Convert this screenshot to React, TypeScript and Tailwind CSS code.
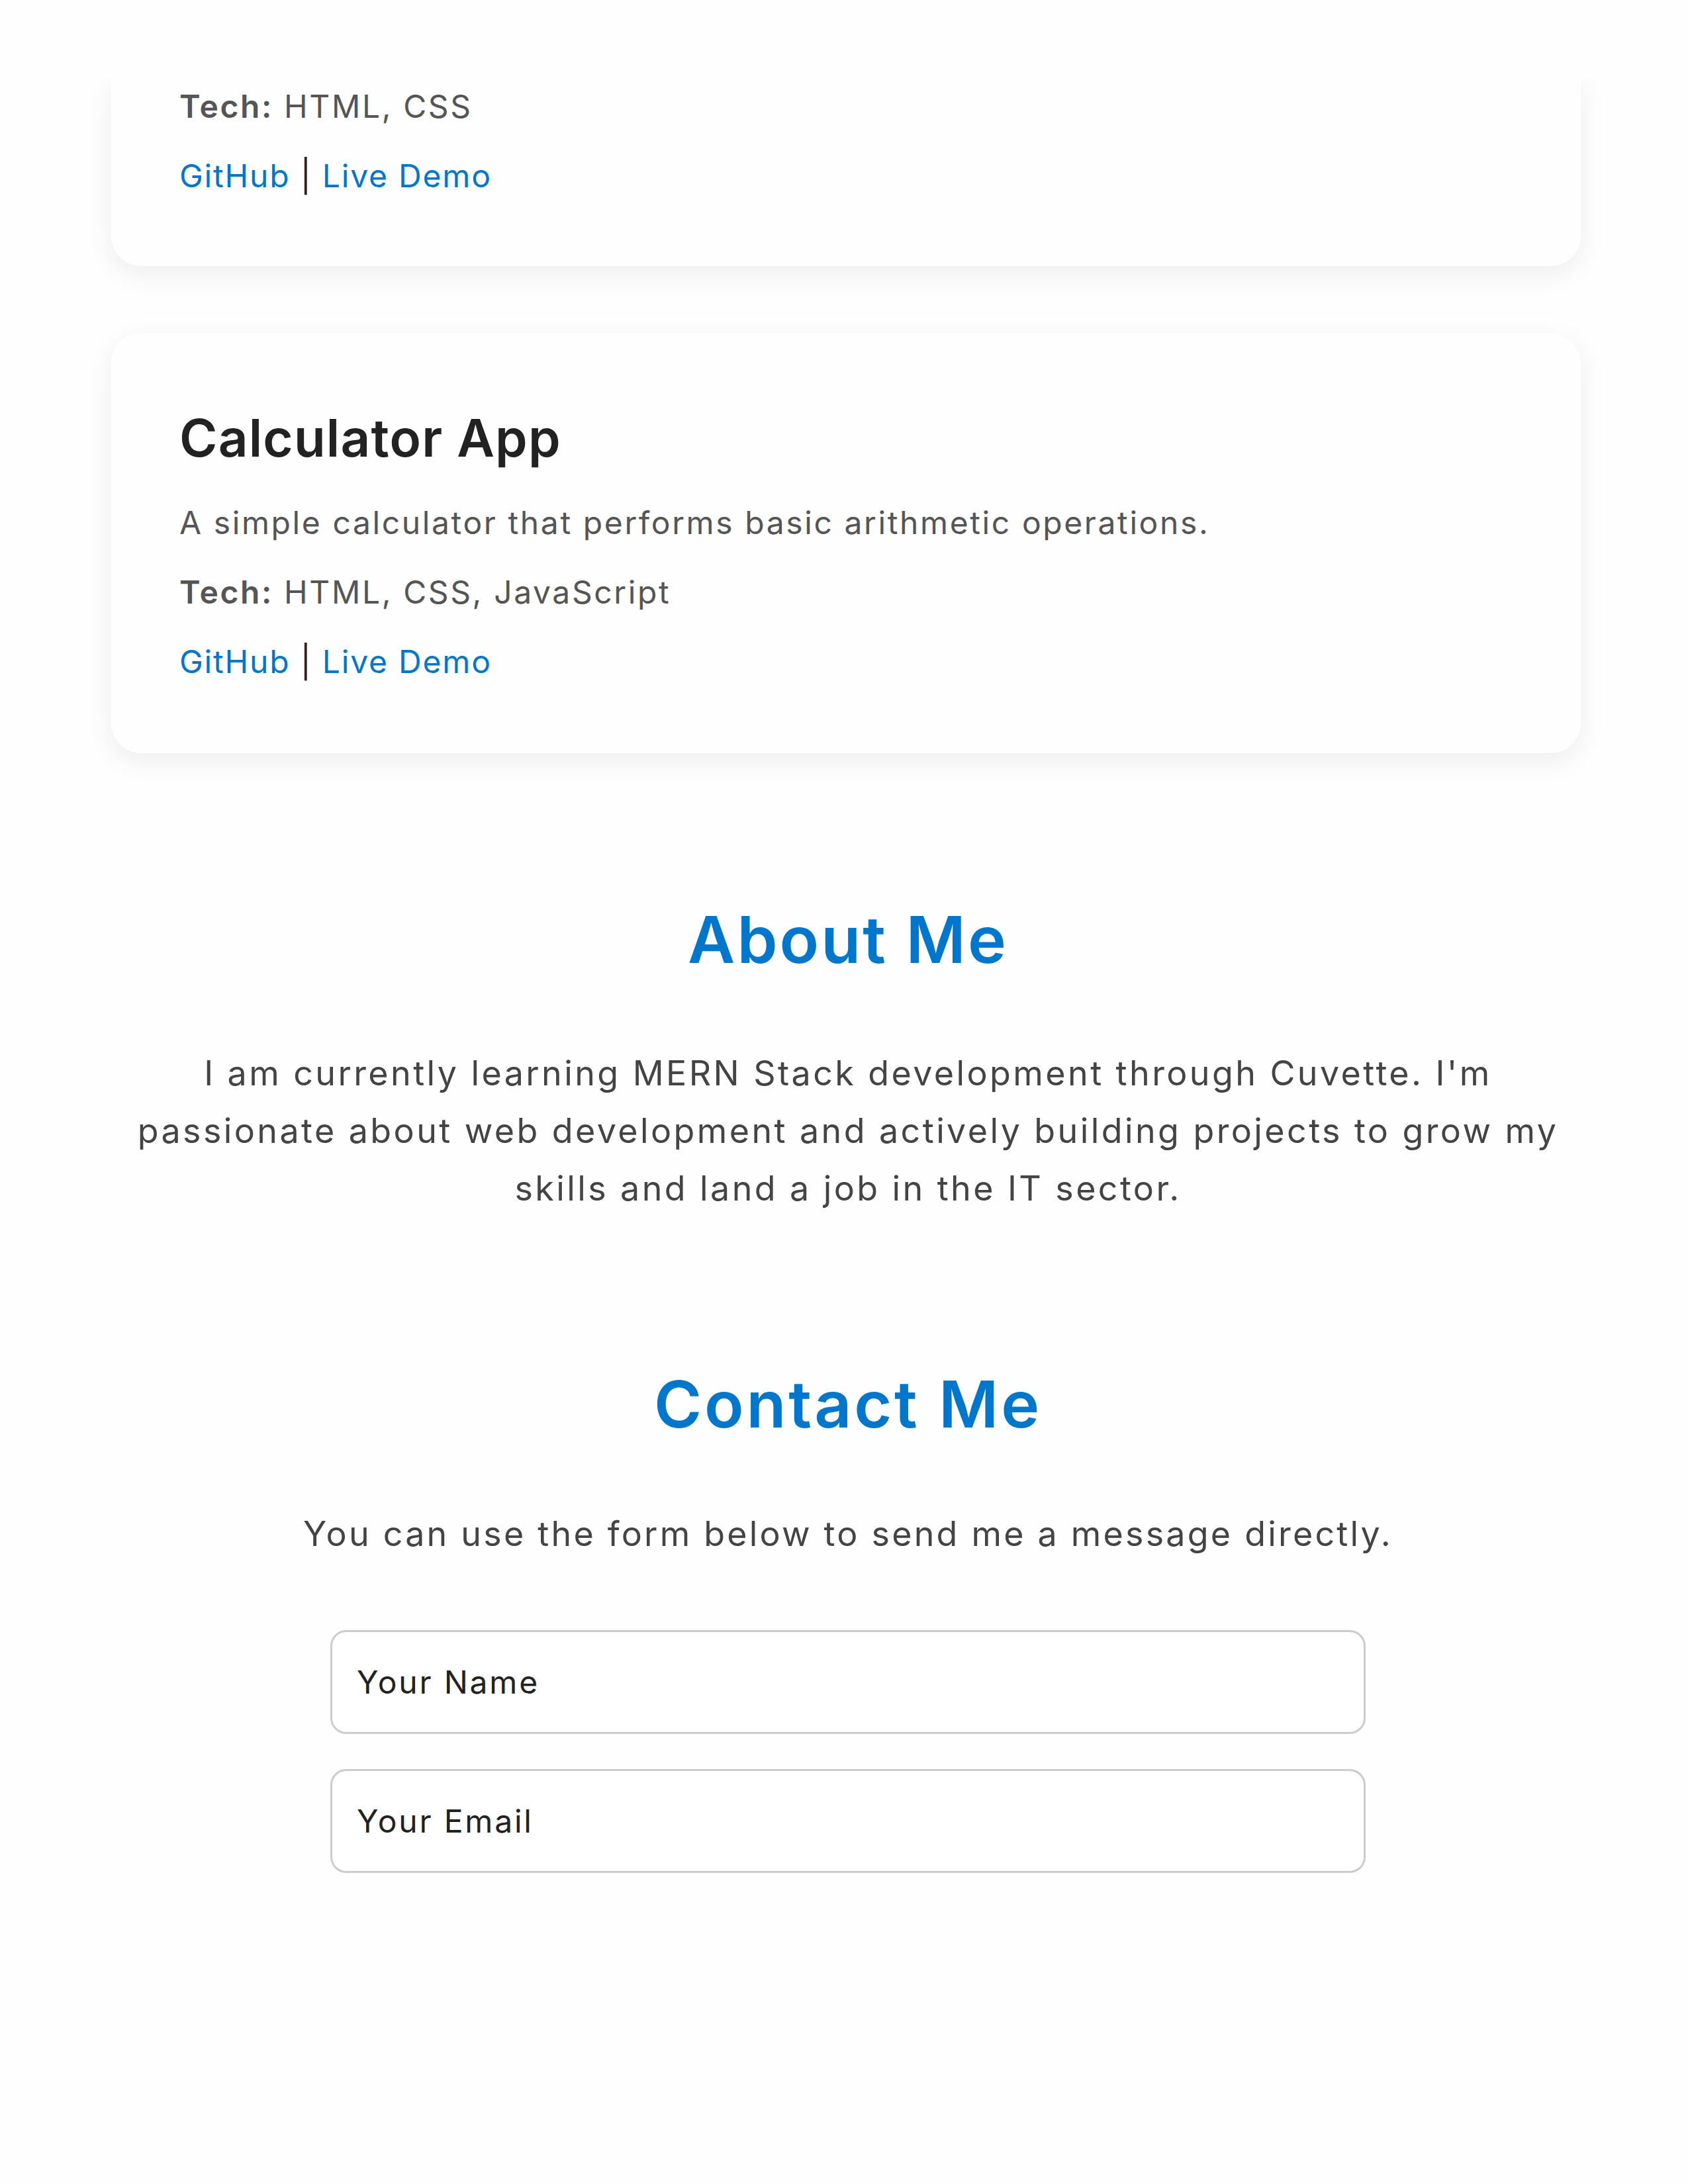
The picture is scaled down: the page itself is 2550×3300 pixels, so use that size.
import React from "react";

const Links = () => (
  <p className="leading-[105px] text-[48px] tracking-[1.8px] text-[#222]">
    <a className="text-[#0077cc]">GitHub</a> | <a className="text-[#0077cc]">Live Demo</a>
  </p>
);

export default function App() {
  return (
    <div className="min-h-[3300px] bg-[#fefefe] font-['Inter',sans-serif]">
      <header className="h-[118px] bg-[#fefefe]" />
      <section className="ml-[116px] mr-[112px] overflow-hidden pl-[52px] pr-[50px] pb-[119px]">
        <div className="rounded-b-[45px] bg-[#fefefe] px-[103px] pb-[84px] shadow-[0_12px_40px_rgba(0,0,0,0.07)]">
          <p className="text-[48px] leading-[85px] tracking-[2.6px] text-[#555]">
            <strong className="font-semibold">Tech:</strong> HTML, CSS
          </p>
          <div className="mt-[10px]">
            <Links />
          </div>
        </div>
        <div className="mt-[101px] rounded-[45px] bg-[#fefefe] px-[103px] pt-[112px] pb-[86px] shadow-[0_12px_40px_rgba(0,0,0,0.07)]">
          <h3 className="text-[78px] font-semibold leading-[94px] tracking-[1.2px] text-[#222]">Calculator App</h3>
          <p className="mt-[28px] text-[48px] leading-[105px] tracking-[2.6px] text-[#555]">
            A simple calculator that performs basic arithmetic operations.
          </p>
          <p className="text-[48px] leading-[105px] tracking-[2.6px] text-[#555]">
            <strong className="font-semibold">Tech:</strong> HTML, CSS, JavaScript
          </p>
          <Links />
        </div>
      </section>

      <section className="mt-[104px] pl-[12px] text-center">
        <h2 className="text-[98px] font-semibold leading-[118px] tracking-[3px] text-[#0077cc]">About Me</h2>
        <p className="mx-auto mt-[99px] text-[52px] leading-[87px] tracking-[3.4px] text-[#444]">
          I am currently learning MERN Stack development through Cuvette. I'm
          <br />
          passionate about web development and actively building projects to grow my
          <br />
          skills and land a job in the IT sector.
        </p>
      </section>

      <section className="mt-[224px] flex flex-col items-center pl-[12px] text-center">
        <h2 className="text-[98px] font-semibold leading-[118px] tracking-[3.8px] text-[#0077cc]">Contact Me</h2>
        <p className="mt-[93px] text-[52px] leading-[87px] tracking-[3.2px] text-[#444]">
          You can use the form below to send me a message directly.
        </p>
        <form className="mt-[102px] flex w-[1564px] flex-col gap-[53px]">
          <input
            type="text"
            placeholder="Your Name"
            className="h-[157px] w-full rounded-[24px] border-[3px] border-[#cccccc] bg-white px-[37px] text-[48px] tracking-[2.8px] text-[#222] placeholder:text-[#222] outline-none"
          />
          <input
            type="email"
            placeholder="Your Email"
            className="h-[157px] w-full rounded-[24px] border-[3px] border-[#cccccc] bg-white px-[37px] text-[48px] tracking-[2.8px] text-[#222] placeholder:text-[#222] outline-none"
          />
        </form>
      </section>
    </div>
  );
}
